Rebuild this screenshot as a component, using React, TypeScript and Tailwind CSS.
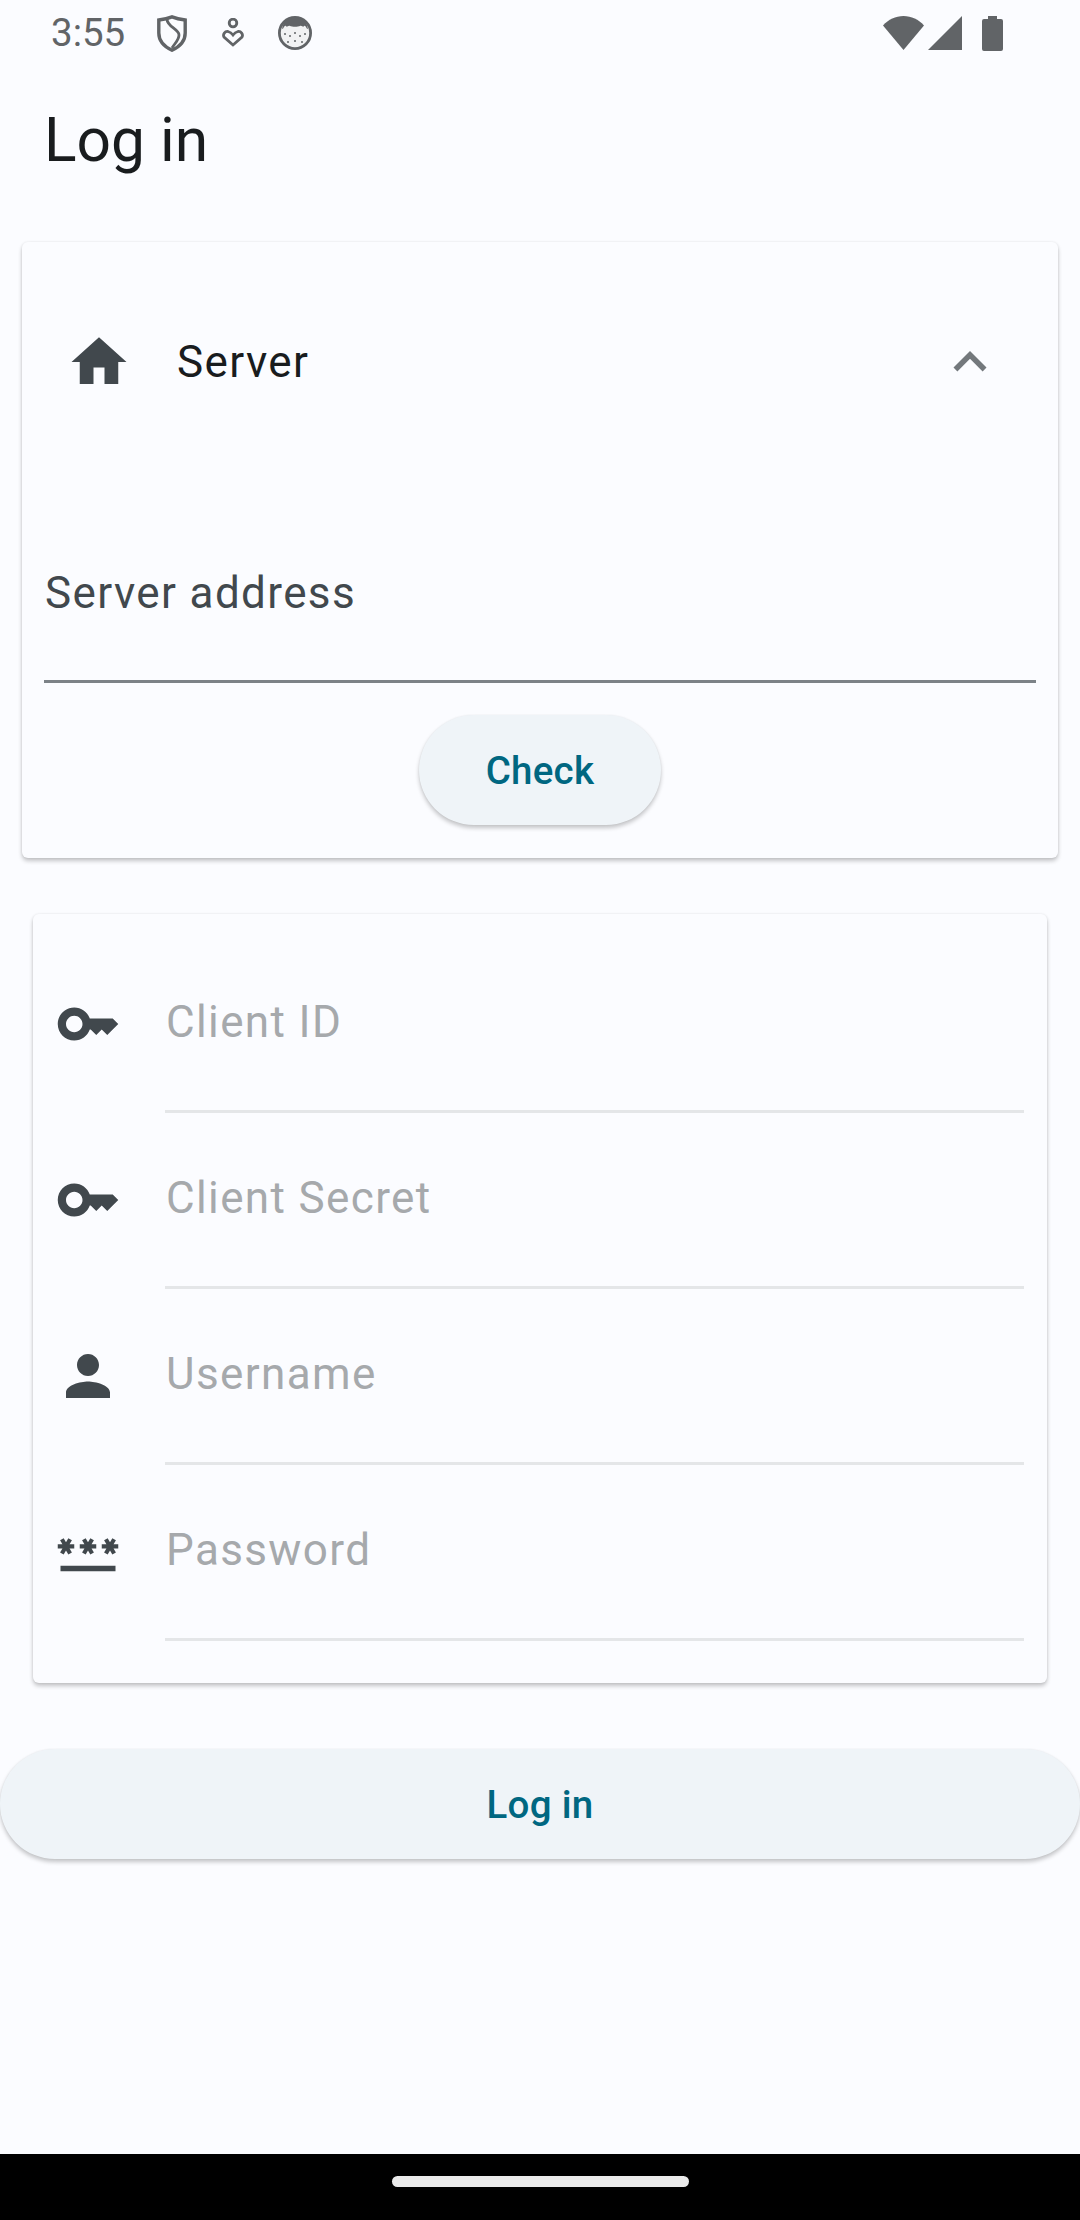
const iconColor = "#41484d";

function MatIcon({ d, className }: { d: string; className?: string }) {
  return (
    <svg viewBox="0 0 24 24" fill={iconColor} className={className}>
      <path d={d} />
    </svg>
  );
}

const HOME = "M10 20v-6h4v6h5v-8h3L12 3 2 12h3v8z";
const KEY =
  "M21 10h-8.35C11.83 7.67 9.61 6 7 6c-3.31 0-6 2.69-6 6s2.69 6 6 6c2.61 0 4.83-1.67 5.65-4H13l2 2 2-2 2 2 4-4.04L21 10zM7 15c-1.65 0-3-1.35-3-3s1.35-3 3-3 3 1.35 3 3-1.35 3-3 3z";
const PERSON =
  "M12 12c2.21 0 4-1.79 4-4s-1.79-4-4-4-4 1.79-4 4 1.79 4 4 4zm0 2c-2.67 0-8 1.34-8 4v2h16v-2c0-2.66-5.33-4-8-4z";
const PASSWORD =
  "M2 17h20v2H2v-2zm1.15-4.05L4 11.47l.85 1.48 1.3-.75-.85-1.48H7v-1.5H5.3l.85-1.47L4.85 7 4 8.47 3.15 7l-1.3.75.85 1.47H1v1.5h1.7l-.85 1.48 1.3.75zm6.7-.75 1.3.75.85-1.48.85 1.48 1.3-.75-.85-1.48H15v-1.5h-1.7l.85-1.47-1.3-.75L12 8.47 11.15 7l-1.3.75.85 1.47H9v1.5h1.7l-.85 1.48zM23 9.22h-1.7l.85-1.47-1.3-.75L20 8.47 19.15 7l-1.3.75.85 1.47H17v1.5h1.7l-.85 1.48 1.3.75.85-1.48.85 1.48 1.3-.75-.85-1.48H23v-1.5z";

const fields = [
  { label: "Client ID", icon: KEY },
  { label: "Client Secret", icon: KEY },
  { label: "Username", icon: PERSON },
  { label: "Password", icon: PASSWORD },
];

function StatusBar() {
  return (
    <div className="flex h-[66px] items-center pl-[51px] pr-[77px] text-[38.5px] leading-none text-[#616467]">
      <span className="w-[73px]">3:55</span>
      {/* shield */}
      <svg viewBox="0 0 30 37" className="ml-[33px] h-[37px] w-[30px]" fill="none" stroke="#616467" strokeWidth="3.4">
        <path d="M15 1.9 C19 3.5 24 4.5 28.2 5 V18 C28.2 26 22 32 15 35.2 C8 32 1.8 26 1.8 18 V5 C6 4.5 11 3.5 15 1.9 Z" />
        <path d="M10 4 C10 12 22 14 22 20 C22 25 18 28 15 33" strokeWidth="2.8" />
      </svg>
      {/* person with heart */}
      <svg viewBox="0 0 22 30" className="ml-[35px] h-[30px] w-[22px]" fill="none" stroke="#616467" strokeWidth="2.8">
        <circle cx="11" cy="5" r="3.8" />
        <path d="M11 27 L2 19 C0.5 16.5 3 13 6 13.5 C8 14 9.5 15 11 17 C12.5 15 14 14 16 13.5 C19 13 21.5 16.5 20 19 Z" />
      </svg>
      {/* app glyph */}
      <svg viewBox="0 0 34 34" className="ml-[34px] h-[34px] w-[34px]">
        <circle cx="17" cy="17" r="15.6" fill="#f1f2f3" stroke="#616467" strokeWidth="2.8" />
        <path d="M4 13 C5 5 11 1.5 17 1.5 C23 1.5 29 5 30 13 C28 13 28 9 26 10 C25 12 24 9 22 10 C20 11 14 11 12 10 C10 9 9 12 8 10 C6 9 6 13 4 13 Z" fill="#616467" />
        <g fill="#616467">
          <circle cx="7" cy="18" r="1" />
          <circle cx="12" cy="20" r="1" />
          <circle cx="17" cy="17" r="1" />
          <circle cx="22" cy="20" r="1" />
          <circle cx="27" cy="18" r="1" />
          <circle cx="10" cy="26" r="1" />
          <circle cx="17" cy="25" r="1" />
          <circle cx="24" cy="26" r="1" />
        </g>
      </svg>
      <div className="flex-1" />
      {/* wifi */}
      <svg viewBox="0 0 41 34" className="h-[34px] w-[41px]" fill="#616467">
        <path d="M20.5 34 L0 9.5 C5.5 3.5 12.5 0 20.5 0 C28.5 0 35.5 3.5 41 9.5 Z" />
      </svg>
      {/* signal */}
      <svg viewBox="0 0 34 34" className="ml-[4px] h-[34px] w-[34px]" fill="#616467">
        <path d="M34 0 V34 H0 Z" />
      </svg>
      {/* battery */}
      <svg viewBox="0 0 21 35" className="ml-[20px] h-[35px] w-[21px]" fill="#616467">
        <path d="M6 0 H15 V3 H19 Q21 3 21 5 V33 Q21 35 19 35 H2 Q0 35 0 33 V5 Q0 3 2 3 H6 Z" />
      </svg>
    </div>
  );
}

export default function App() {
  return (
    <div className="flex h-[2220px] w-[1080px] flex-col overflow-hidden bg-[#fbfcff] font-['Roboto',sans-serif]">
      <StatusBar />

      <h1 className="ml-[44px] mt-[40px] text-[60.5px] leading-[70px] text-[#191c1e]">Log in</h1>

      {/* Server card */}
      <div className="mx-[22px] mt-[66px] rounded-[6px] shadow-[0_3px_4px_rgba(0,0,0,0.22),0_0_3px_rgba(0,0,0,0.08)]">
        <div className="flex h-[240px] items-center pl-[44px] pr-[55px]">
          <MatIcon d={HOME} className="h-[66px] w-[66px]" />
          <span className="ml-[45px] flex-1 text-[44px] tracking-[1.375px] text-[#191c1e]">Server</span>
          <svg viewBox="0 0 24 24" className="h-[66px] w-[66px]" fill="#73787c">
            <path d="M12 8l-6 6 1.41 1.41L12 10.83l4.59 4.58L18 14z" />
          </svg>
        </div>
        <div className="px-[22px] pb-[33px]">
          <div className="flex h-[201px] items-end border-b-[3px] border-[#7c8287] pb-[61px] pl-[1px]">
            <span className="text-[44px] leading-[52px] tracking-[1.375px] text-[#41484d]">Server address</span>
          </div>
          <div className="mt-[32px] flex justify-center">
            <button className="flex h-[110px] w-[242px] items-center justify-center rounded-full bg-[#eff4f8] pt-[2px] text-[38.5px] font-medium tracking-[0.275px] text-[#006781] shadow-[0_3px_4px_rgba(0,0,0,0.22),0_0_2px_rgba(0,0,0,0.06)]">
              Check
            </button>
          </div>
        </div>
      </div>

      {/* Credentials card */}
      <div className="mx-[33px] mt-[56px] rounded-[6px] pb-[42px] pl-[22px] pr-[23px] pt-[23px] shadow-[0_3px_4px_rgba(0,0,0,0.22),0_0_3px_rgba(0,0,0,0.08)]">
        {fields.map((field) => (
          <div key={field.label} className="flex h-[176px] items-center">
            <MatIcon d={field.icon} className="h-[66px] w-[66px] shrink-0 -translate-y-[1px]" />
            <div className="ml-[44px] flex h-full flex-1 items-center border-b-[3px] border-[#e4e6e8] pb-[4px] pl-[1px]">
              <span className="text-[44px] leading-[52px] tracking-[1.375px] text-[#a6a9ac]">{field.label}</span>
            </div>
          </div>
        ))}
      </div>

      <button className="mt-[66px] flex h-[110px] w-full items-center justify-center rounded-full bg-[#eff4f8] pt-[2px] text-[38.5px] font-medium tracking-[0.275px] text-[#006781] shadow-[0_3px_4px_rgba(0,0,0,0.22),0_0_2px_rgba(0,0,0,0.06)]">
        Log in
      </button>

      <div className="flex-1" />

      {/* Gesture bar */}
      <div className="flex h-[66px] items-center justify-center bg-black">
        <div className="-translate-y-[6px] h-[11px] w-[297px] rounded-full bg-[#ebebeb]" />
      </div>
    </div>
  );
}
